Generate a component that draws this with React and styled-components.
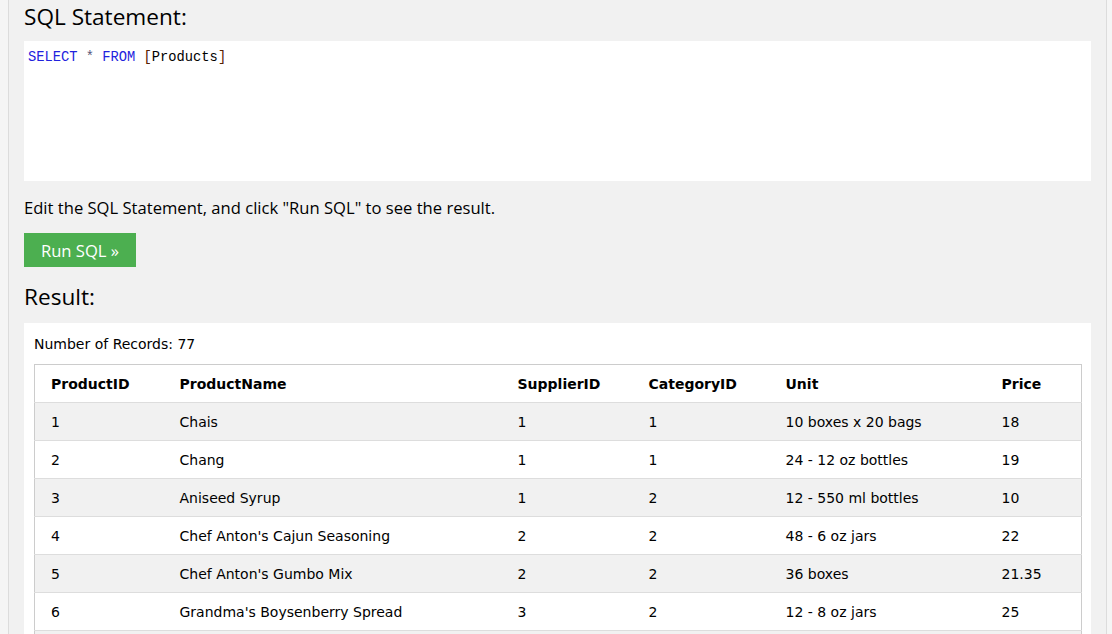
import React from "react";
import styled, { createGlobalStyle } from "styled-components";

const Global = createGlobalStyle`
  html, body { margin: 0; padding: 0; background: #ffffff; }
  body { font-family: "Open Sans", "Noto Sans", sans-serif; color: #000; }
`;

const Outside = styled.div`
  display: flex;
  background: #f5f5f5;
  height: 634px;
  overflow: hidden;
`;

const Frame = styled.div`
  margin-left: 8px;
  width: 1099px;
  min-height: 634px;
  background: #f1f1f1;
  border-left: 1px solid #dcdcdc;
  border-right: 1px solid #dcdcdc;
  padding: 0 15px;
  box-sizing: border-box;
`;

const Heading = styled.h3`
  margin: 0;
  padding-top: 2px;
  height: 39px;
  font-family: "Open Sans", "Noto Sans", sans-serif;
  font-weight: 400;
  font-size: 22.6px;
  line-height: 30px;
  color: #000;
`;

const ResultHeading = styled(Heading)`
  padding-top: 0;
  line-height: 26px;
  margin-top: 17px;
`;

const CodeBox = styled.div`
  background: #fff;
  height: 140px;
  padding: 9px 4px 0;
  box-sizing: border-box;
  font-family: "Liberation Mono", "DejaVu Sans Mono", monospace;
  font-size: 13.75px;
  line-height: 16px;
  color: #000;
  white-space: pre;
`;

const Kw = styled.span`
  color: #2222dd;
`;
const Op = styled.span`
  color: #555577;
`;
const Br = styled.span`
  color: #552200;
`;

const Note = styled.p`
  margin: 0;
  padding-top: 16px;
  height: 52px;
  box-sizing: border-box;
  font-family: "Open Sans", "Noto Sans", sans-serif;
  font-size: 16.6px;
  line-height: 22px;
  color: #000;
`;

const RunButton = styled.button`
  display: block;
  width: 112px;
  height: 34px;
  border: none;
  background: #4caf50;
  color: #fff;
  font-family: "Open Sans", "Noto Sans", sans-serif;
  font-size: 16.6px;
  padding: 0;
  margin: 0;
  cursor: pointer;
`;

const ResultBox = styled.div`
  background: #fff;
  padding: 11px 10px 0 10px;
`;

const Count = styled.div`
  font-family: "DejaVu Sans", Verdana, sans-serif;
  font-size: 14px;
  line-height: 20px;
  height: 30px;
  color: #000;
`;

const Table = styled.table`
  border-collapse: collapse;
  table-layout: fixed;
  width: 1047px;
  border: 1px solid #cccccc;
  font-family: "DejaVu Sans", Verdana, sans-serif;
  font-size: 14px;
  color: #000;
`;

const Row = styled.tr`
  height: 38px;
  background: ${(p) => (p.$shade ? "#f1f1f1" : "#ffffff")};
  border-bottom: 1px solid #dddddd;
`;

const Th = styled.th`
  text-align: left;
  font-weight: 700;
  padding: 0 8px;
  &:first-child { padding-left: 16px; }
`;

const Td = styled.td`
  padding: 0 8px;
  white-space: nowrap;
  &:first-child { padding-left: 16px; }
`;

const cols = [137, 338, 131, 137, 216, 88];
const headers = ["ProductID", "ProductName", "SupplierID", "CategoryID", "Unit", "Price"];
const rows = [
  ["1", "Chais", "1", "1", "10 boxes x 20 bags", "18"],
  ["2", "Chang", "1", "1", "24 - 12 oz bottles", "19"],
  ["3", "Aniseed Syrup", "1", "2", "12 - 550 ml bottles", "10"],
  ["4", "Chef Anton's Cajun Seasoning", "2", "2", "48 - 6 oz jars", "22"],
  ["5", "Chef Anton's Gumbo Mix", "2", "2", "36 boxes", "21.35"],
  ["6", "Grandma's Boysenberry Spread", "3", "2", "12 - 8 oz jars", "25"],
  ["7", "Uncle Bob's Organic Dried Pears", "3", "7", "12 - 1 lb pkgs.", "30"],
];

export default function App() {
  return (
    <>
      <Global />
      <Outside>
        <Frame>
          <Heading>SQL Statement:</Heading>
          <CodeBox>
            <Kw>SELECT</Kw> <Op>*</Op> <Kw>FROM</Kw> <Br>[</Br>Products<Br>]</Br>
          </CodeBox>
          <Note>Edit the SQL Statement, and click "Run SQL" to see the result.</Note>
          <RunButton>Run SQL »</RunButton>
          <ResultHeading>Result:</ResultHeading>
          <ResultBox>
            <Count>Number of Records: 77</Count>
            <Table>
              <colgroup>
                {cols.map((w, i) => (
                  <col key={i} style={{ width: w }} />
                ))}
              </colgroup>
              <thead>
                <Row>
                  {headers.map((h) => (
                    <Th key={h}>{h}</Th>
                  ))}
                </Row>
              </thead>
              <tbody>
                {rows.map((r, i) => (
                  <Row key={i} $shade={i % 2 === 0}>
                    {r.map((c, j) => (
                      <Td key={j}>{c}</Td>
                    ))}
                  </Row>
                ))}
              </tbody>
            </Table>
          </ResultBox>
        </Frame>
      </Outside>
    </>
  );
}
